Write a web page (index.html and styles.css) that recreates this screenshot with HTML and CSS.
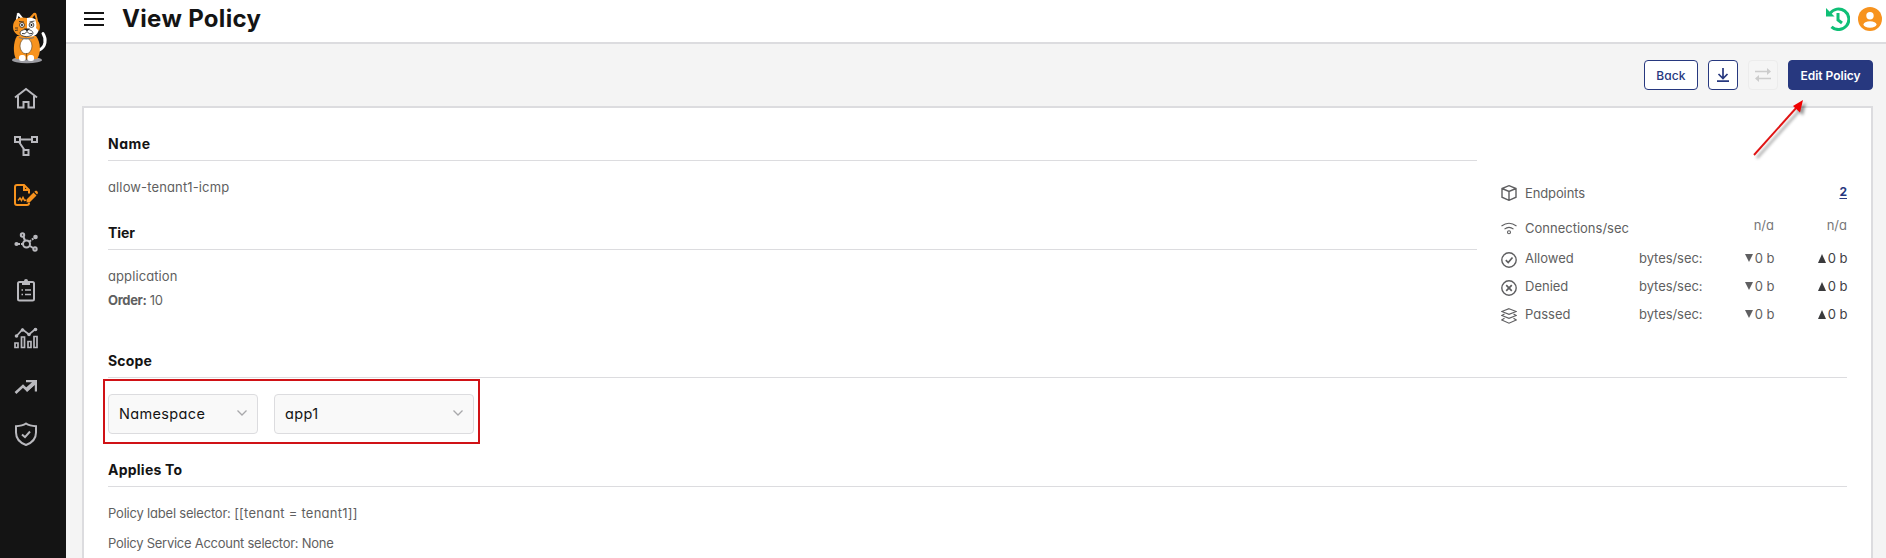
FILE: index.html
```html
<!DOCTYPE html>
<html lang="en">
<head>
<meta charset="utf-8">
<title>View Policy</title>
<link rel="stylesheet" href="styles.css">
</head>
<body>
<div class="app">
  <aside class="sidebar">
    <svg class="logo" width="36" height="52" viewBox="0 0 36 52">
      <ellipse cx="15" cy="48" rx="15" ry="3.200" fill="#9b9ba1"/>
      <path d="M27 38C34 35 34.500 27 31 21.500" fill="none" stroke="#fff" stroke-width="3" stroke-linecap="round"/>
      <path d="M5 24C1 30 1 42 4 47h21c4-5 4-17-1-23z" fill="#f7931e"/>
      <ellipse cx="14" cy="34" rx="6" ry="7.800" fill="#fff" stroke="#5a3a14" stroke-width=".6"/>
      <path d="M3.500 10L5 1.500Q6 0 7.500 1.500L12 7z" fill="#fff"/>
      <path d="M17 6l4.500-5Q23.500 0 24.500 2L26 9z" fill="#f7931e"/>
      <path d="M5.500 8l1-4 3 3zM20 6.500L22.500 3l1.500 4.500z" fill="#141414"/>
      <path d="M15 6C6 4 1 8 1 15c0 6 5 10 14 10z" fill="#f7931e"/>
      <path d="M15 6c9-1 12 4 12 9 0 7-4 10-12 10z" fill="#fff"/>
      <path d="M23 7c5 2 6 8 4 12l-3-3c1-3 0-6-1-9z" fill="#f7931e"/>
      <g fill="#fff" stroke="#222" stroke-width=".8"><circle cx="10" cy="13" r="2.400"/><circle cx="19.500" cy="13" r="2.400"/></g>
      <circle cx="10" cy="13" r=".9"/><circle cx="19.500" cy="13" r=".9"/>
      <path d="M7 9.500l5 .5M17.500 10l5-1M3 16h3M3 18.500l3-.5" stroke="#222" stroke-width=".8"/>
      <ellipse cx="14.500" cy="21" rx="6.500" ry="3.600" fill="#fff" stroke="#333" stroke-width=".8"/>
      <path d="M12 16.500h6l-3 3z" fill="#222"/>
      <path d="M10 21.500q3 1.500 5-2 2 3.500 5 2" fill="none" stroke="#222" stroke-width=".9"/>
      <path d="M7 25.500q7 2.500 15 0" fill="none" stroke="#777" stroke-width="1.300"/>
      <rect x="7" y="43" width="6.500" height="6" rx="2.500" fill="#fff"/><rect x="15.500" y="43" width="6.500" height="6" rx="2.500" fill="#fff"/>
      <path d="M14.500 41v7" stroke="#7a4a10" stroke-width=".8"/>
    </svg>
    <nav class="nav">
      <a class="nav-item"><svg class="nav-icon" viewBox="0 0 24 24"><path d="M1 11.500L12 3l11 8.500M4 10v11.500h5.500V16h5v5.500H20V10"/></svg></a>
      <a class="nav-item"><svg class="nav-icon" viewBox="0 0 24 24"><path d="M1 3h5v5H1zM18 3h5v5h-5zM9.500 16h5v5h-5zM6 5.500h12M5 8l5.500 8"/></svg></a>
      <a class="nav-item nav-active nav-low"><svg class="nav-icon" viewBox="0 0 24 24"><path d="M15 10.500V7l-5-5H3a2 2 0 0 0-2 2v16a2 2 0 0 0 2 2h10a2 2 0 0 0 2-2v-.500M10 2v5h5"/><path d="M4 17.500l2-2.500 1.500 2.500 1.500-3 1.500 3 2-.500" stroke-width="1.500"/><path class="solid" d="M13 16l6.500-6.500 3 3L16 19l-3.500.500zM20.300 8.700L22 7.500q2 .5 2 2.500l-1 1.500z"/></svg></a>
      <a class="nav-item nav-low"><svg class="nav-icon" viewBox="0 0 24 24"><circle cx="12.500" cy="13" r="3.500"/><circle cx="8.500" cy="4" r="1.700"/><circle cx="21" cy="18" r="1.700"/><path d="M9.500 6l1.500 3.500M16 15l3 2"/><path d="M4 13h5M15.500 10.500L20 7" stroke-dasharray="2 1"/><g class="solid"><circle cx="2.500" cy="13" r="2.100"/><circle cx="21.500" cy="6" r="2.300"/></g></svg></a>
      <a class="nav-item"><svg class="nav-icon" viewBox="0 0 24 24"><rect x="4" y="4" width="16" height="18.500" rx="1.500"/><path class="solid" d="M8 3h2a2 2 0 0 1 4 0h2v4H8z"/><path d="M7.500 12h1.500M11 12h6M7.500 16.500h1.500M11 16.500h6" stroke-width="1.500"/></svg></a>
      <a class="nav-item"><svg class="nav-icon" viewBox="0 0 24 24"><path d="M2.500 10L8.500 3.500l6.500 5L21.500 3M1 17h3v4.500H1zM7.500 11h3v10.500h-3zM14 15.500h3v6h-3zM20 10.500h3v11h-3z" stroke-width="1.700"/><g class="solid"><circle cx="2.500" cy="10" r="1.800"/><circle cx="8.500" cy="4" r="1.800"/><circle cx="15" cy="8.500" r="1.800"/><circle cx="21.500" cy="3.500" r="1.800"/></g></svg></a>
      <a class="nav-item nav-low"><svg class="nav-icon" viewBox="0 0 24 24"><path d="M1.500 18L9 11l4 4 8-7.500" stroke-width="2.600"/><path class="solid" d="M12 5h11v11.500h-2.200V10L13 17l-1.500-4L18 7.200h-6z"/></svg></a>
      <a class="nav-item"><svg class="nav-icon" viewBox="0 0 24 24"><path d="M12 1.500c3 2 6 2.500 10 2.700v6.300C22 17 17.500 21 12 23 6.500 21 2 17 2 10.500V4.200C6 4 9 3.500 12 1.500zM8 12.500l3 2.700L16 9.500"/></svg></a>
    </nav>
  </aside>
  <div class="page">
    <header class="header">
      <svg class="burger" width="20" height="14" viewBox="0 0 20 14"><path d="M0 1h20M0 7h20M0 13h20"/></svg>
      <h1 class="title">View Policy</h1>
      <div class="header-icons">
        <svg width="24" height="24" viewBox="0 0 24 24" fill="none" stroke="#0fbf76" stroke-width="3"><path d="M4 6.500A10.300 10.300 0 1 1 5.500 19.800M12 6v7l4 3"/><path d="M0 1v8.500h8.500z" fill="#0fbf76" stroke="none"/></svg>
        <svg width="24" height="24" viewBox="0 0 24 24"><circle cx="12" cy="12" r="12" fill="#f7931e"/><circle cx="12" cy="8.800" r="3.700" fill="#fff"/><ellipse cx="12" cy="17.500" rx="6.500" ry="3.300" fill="#fff"/></svg>
      </div>
    </header>
    <main class="main">
      <div class="toolbar">
        <button class="btn btn-back">Back</button>
        <button class="btn btn-icon"><svg width="14" height="14" viewBox="0 0 14 14" fill="none" stroke="#27387f" stroke-width="1.700"><path d="M7 0v10M2.500 6L7 10.500 11.500 6M1 13.200h12"/></svg></button>
        <button class="btn btn-icon btn-disabled"><svg width="16" height="14" viewBox="0 0 16 14" fill="none" stroke="#ccc" stroke-width="1.700"><path d="M0 3.500h13M3 10.500h13"/><path d="M12 0l4 3.500L12 7zM4 7L0 10.500 4 14z" fill="#ccc" stroke="none"/></svg></button>
        <button class="btn btn-primary">Edit Policy</button>
      </div>
      <section class="card">
        <div class="top">
          <div class="details">
            <h2 class="heading name">Name</h2>
            <p class="value t-name">allow-tenant1-icmp</p>
            <h2 class="heading tier">Tier</h2>
            <p class="value t-app">application</p>
            <p class="value t-order"><b>Order:</b> 10</p>
          </div>
          <div class="stats">
            <div class="stat stat-endpoints">
              <svg class="stat-icon" viewBox="0 0 16 16"><path d="M8 .700l7 2.800v8.700L8 15.300 1 12.200V3.500zM1 3.500l7 3 7-3M8 6.500v8.800"/></svg>
              <span class="t-endpoints">Endpoints</span><span></span><span></span><a class="count">2</a>
            </div>
            <div class="stat stat-conn">
              <svg class="stat-icon" viewBox="0 0 16 16"><path d="M.500 6q7.500-5.500 15 0M3.500 9.200q4.500-3.700 9 0" stroke-width="1.100"/><circle cx="8" cy="12.300" r="1.500" stroke-width="1.100"/></svg>
              <span class="t-conn">Connections/sec</span><span></span><span class="na">n/a</span><span class="na">n/a</span>
            </div>
            <div class="stat stat-rate">
              <svg class="stat-icon" viewBox="0 0 16 16"><circle cx="8" cy="8" r="7.200"/><path d="M4.800 8.200l2.400 2.300 4.300-5" stroke-width="1.700"/></svg>
              <span>Allowed</span><span class="t-bytes">bytes/sec:</span><span class="rate"><i class="down"></i>0 b</span><span class="rate rate-up"><i class="up"></i>0 b</span>
            </div>
            <div class="stat stat-rate">
              <svg class="stat-icon" viewBox="0 0 16 16"><circle cx="8" cy="8" r="7.200"/><path d="M5.200 5.200l5.600 5.600M10.800 5.200l-5.600 5.600" stroke-width="1.700"/></svg>
              <span>Denied</span><span class="t-bytes">bytes/sec:</span><span class="rate"><i class="down"></i>0 b</span><span class="rate rate-up"><i class="up"></i>0 b</span>
            </div>
            <div class="stat stat-rate">
              <svg class="stat-icon" viewBox="0 0 16 16"><path d="M8 .700l7.300 2.800L8 6.300.700 3.500zM3.500 6L.700 7.500 8 10.300l7.300-2.800L12.500 6M3.500 10.300L.700 12 8 15.200l7.300-3.200-2.800-1.700" stroke-width="1.200"/></svg>
              <span>Passed</span><span class="t-bytes">bytes/sec:</span><span class="rate"><i class="down"></i>0 b</span><span class="rate rate-up"><i class="up"></i>0 b</span>
            </div>
          </div>
        </div>
        <h2 class="heading scope">Scope</h2>
        <div class="selects">
          <div class="select select-kind"><span>Namespace</span><svg width="10" height="6" viewBox="0 0 10 6"><path d="M.500.500L5 5 9.500.500"/></svg></div>
          <div class="select select-value"><span>app1</span><svg width="10" height="6" viewBox="0 0 10 6"><path d="M.500.500L5 5 9.500.500"/></svg></div>
          <div class="highlight"></div>
        </div>
        <h2 class="heading applies">Applies To</h2>
        <p class="value t-label">Policy label selector: <span class="expr">[[tenant = tenant1]]</span></p>
        <p class="value t-account">Policy Service Account selector: None</p>
      </section>
    </main>
  </div>
</div>
<svg class="pointer" width="66" height="70" viewBox="0 0 66 70"><path d="M9 60L52 12" stroke="#e01414" stroke-width="1.900"/><path d="M58 5L55 17.500 48 11z" fill="#f00000"/></svg>
</body>
</html>
```
FILE: styles.css
```css
* { box-sizing: border-box; }
body {
  margin: 0;
  height: 558px;
  overflow: hidden;
  font-family: Inter, "Open Sans", sans-serif;
  font-size: 13px;
  font-feature-settings: "cv11";
  color: #5f5f61;
  background: #f4f4f4;
}
h1, h2, p { margin: 0; }
.app { display: flex; height: 558px; }
.sidebar { width: 66px; flex: none; background: #141414; padding: 12px 0 0 12px; }
.logo { display: block; }
.nav { display: flex; flex-direction: column; margin: 10px 0 0 2px; }
.nav-item { height: 48px; display: flex; align-items: center; color: #b9b9be; }
.nav-active { color: #f7931e; }
.nav-low { padding-top: 2px; }
.nav-icon { width: 24px; height: 24px; fill: none; stroke: currentColor; stroke-width: 2; overflow: visible; }
.nav-icon .solid { fill: currentColor; stroke: none; }
.page { flex: 1; min-width: 0; }
.header { height: 44px; background: #fff; border-bottom: 2px solid #dcdcdf; display: flex; align-items: flex-start; padding: 0 4px 0 18px; }
.burger { margin-top: 12px; stroke: #141414; stroke-width: 2; }
.title { margin-left: 18px; font-size: 24px; line-height: 37px; font-weight: 700; letter-spacing: .33px; color: #141414; }
.header-icons { margin: 7px 0 0 auto; display: flex; gap: 8px; }
.main { padding: 16px 13px 0 16px; }
.toolbar { display: flex; justify-content: flex-end; gap: 10px; height: 30px; }
.btn { height: 30px; border: 1px solid #27387f; border-radius: 4px; background: #fff; color: #27387f; font: 500 12px Inter, sans-serif; font-feature-settings: "cv11"; padding: 0; display: flex; align-items: center; justify-content: center; white-space: nowrap; }
.btn-back { width: 54px; letter-spacing: .1px; }
.btn-icon { width: 30px; }
.btn-disabled { border-color: #ececec; background: #f5f5f5; }
.btn-primary { width: 85px; background: #27387f; color: #fff; font-weight: 600; }
.card { margin-top: 16px; height: 470px; background: #fff; border: 2px solid #dcdcdf; padding: 24px 24px 0; }
.top { display: flex; gap: 24px; height: 217px; }
.details { flex: 1; }
.heading { height: 29px; border-bottom: 1px solid #dcdcdf; font-size: 14px; line-height: 24px; font-weight: 700; color: #141414; }
.value { height: 24px; padding-top: 1px; line-height: 24px; white-space: nowrap; }
.heading + .value { margin-top: 13px; }
.name { letter-spacing: .5px; }
.tier { margin-top: 23px; letter-spacing: -.1px; }
.scope { letter-spacing: .2px; }
.applies { margin-top: 24px; letter-spacing: .24px; }
.t-name { letter-spacing: .13px; }
.t-app { letter-spacing: .1px; }
.t-order { letter-spacing: -.35px; }
.t-label { letter-spacing: -.2px; }
.expr { letter-spacing: .24px; }
.t-account { margin-top: 6px; letter-spacing: -.26px; }
.stats { width: 346px; padding-top: 43px; }
.stat { display: grid; grid-template-columns: 24px 114px 1fr 72px 73px; height: 28px; line-height: 27px; align-items: center; white-space: nowrap; }
.stat-endpoints { height: 36px; }
.stat-conn { height: 34px; }
.t-endpoints { letter-spacing: -.12px; }
.t-conn { padding-top: 1px; }
.t-bytes { letter-spacing: -.06px; }
.stat-icon { width: 16px; height: 16px; fill: none; stroke: #5f5f61; stroke-width: 1.400; }
.stat-rate .stat-icon { margin-top: 2px; }
.stat-rate > span { margin-top: -2px; }
.count { text-align: right; color: #27387f; font-weight: 700; font-size: 12px; text-decoration: underline; text-underline-offset: 2px; padding-bottom: 3px; }
.na { text-align: right; padding-bottom: 5px; color: #77777a; }
.rate { display: flex; justify-content: flex-end; align-items: center; }
.rate-up { color: #404043; }
.up, .down { border: 4px solid transparent; margin-right: 2px; }
.down { border-top: 8px solid #5f5f61; border-bottom: 0; }
.up { border-width: 0 4.5px 9px; border-bottom-color: #3a3a3c; }
.selects { position: relative; display: flex; gap: 16px; margin-top: 16px; }
.select { height: 40px; background: #f9f9f9; border: 1px solid #dcdcdf; border-radius: 4px; padding: 0 10px; display: flex; align-items: center; justify-content: space-between; font-size: 14.5px; letter-spacing: .35px; color: #141414; }
.select span { margin-top: -1px; }
.select svg { fill: none; stroke: #a8a8ab; stroke-width: 1.300; margin-top: -3px; }
.select-kind { width: 150px; }
.select-value { width: 200px; }
.highlight { position: absolute; left: -5px; top: -15px; width: 377px; height: 65px; border: 2px solid #d01216; }
.pointer { position: absolute; left: 1745px; top: 95px; fill: none; filter: drop-shadow(3px 3px 1.500px rgba(0,0,0,.4)); }
```
